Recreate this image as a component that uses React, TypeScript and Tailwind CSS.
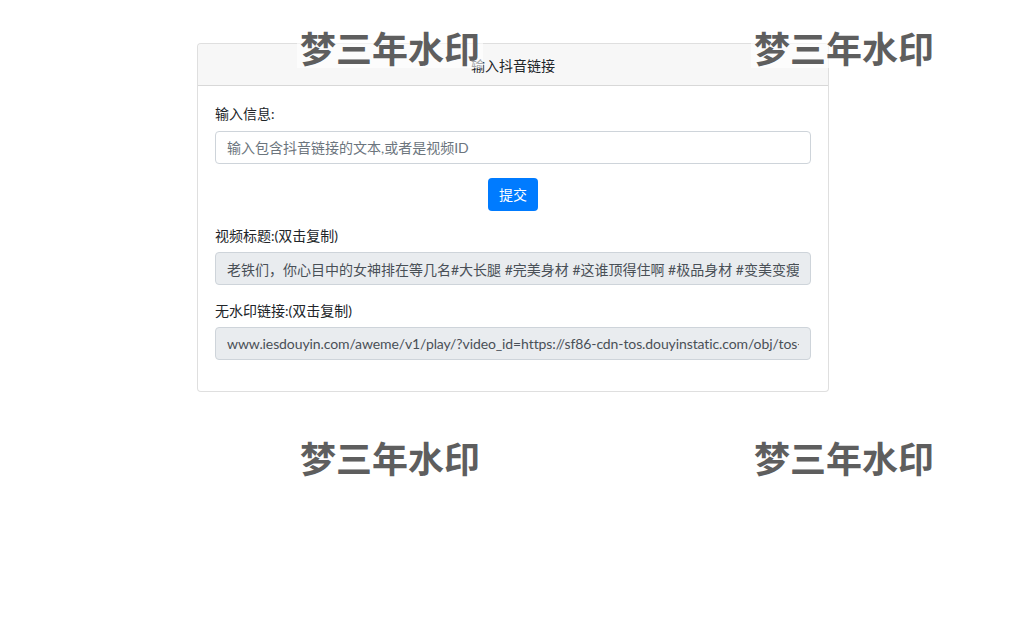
import React from "react";

const cjk = { fontFamily: 'Lato, "Noto Sans CJK SC", sans-serif' };

function Watermark({ className }: { className: string }) {
  return (
    <div
      className={`absolute bg-white/60 text-[#5e5e5e] font-semibold text-[36px] leading-[42px] px-[3px] select-none pointer-events-none ${className}`}
      style={{ fontFamily: '"Noto Sans CJK SC", sans-serif' }}
    >
      梦三年水印
    </div>
  );
}

export default function App() {
  return (
    <div className="relative min-h-[619px] bg-white text-[14px] leading-[21px] text-[#212529]" style={cjk}>
      <div className="pt-[43px] pl-[2px]">
        <div className="mx-auto w-[632px] rounded-[4px] border border-black/[0.125] bg-white">
          <div className="h-[42px] border-b border-black/[0.125] bg-black/[0.03] flex items-center justify-center rounded-t-[4px]">
            <span className="translate-y-[1px]">输入抖音链接</span>
          </div>
          <div className="px-[17px] pt-[17px] pb-[31px]">
            <label className="block mb-[7px]">输入信息:</label>
            <input
              className="block w-full h-[33px] rounded-[4px] border border-[#ced4da] px-[11px] text-[14px] text-[#495057] placeholder:text-[#6c757d] outline-none"
              placeholder="输入包含抖音链接的文本,或者是视频ID"
            />
            <div className="flex justify-center mt-[14px]">
              <button className="h-[33px] w-[50px] rounded-[4px] bg-[#007bff] text-white text-[14px]">提交</button>
            </div>
            <label className="block mt-[14px] mb-[6px]">视频标题:(双击复制)</label>
            <input
              readOnly
              className="block w-full h-[33px] rounded-[4px] border border-[#ced4da] bg-[#e9ecef] px-[11px] text-[14px] text-[#495057] outline-none"
              value="老铁们，你心目中的女神排在等几名#大长腿 #完美身材 #这谁顶得住啊 #极品身材 #变美变瘦变好看"
            />
            <label className="block mt-[15px] mb-[6px]">无水印链接:(双击复制)</label>
            <input
              readOnly
              className="block w-full h-[33px] rounded-[4px] border border-[#ced4da] bg-[#e9ecef] px-[11px] text-[14px] text-[#495057] outline-none tracking-[-0.1px]"
              value="www.iesdouyin.com/aweme/v1/play/?video_id=https://sf86-cdn-tos.douyinstatic.com/obj/tos-cn-ve-15/example"
            />
          </div>
        </div>
      </div>
      <Watermark className="left-[297px] top-[26px]" />
      <Watermark className="left-[751px] top-[26px]" />
      <Watermark className="left-[297px] top-[436px]" />
      <Watermark className="left-[751px] top-[436px]" />
    </div>
  );
}
